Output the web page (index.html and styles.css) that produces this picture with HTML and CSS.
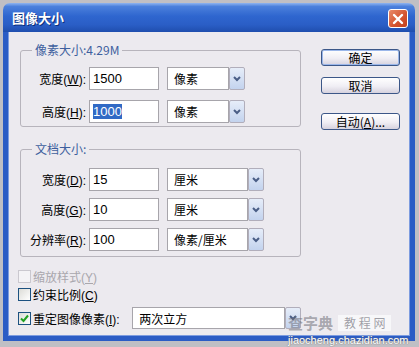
FILE: index.html
```html
<!DOCTYPE html>
<html lang="zh-CN">
<head>
    <meta charset="UTF-8">
    <title>图像大小</title>
    <link rel="stylesheet" href="styles.css">
</head>
<body>
    <div class="window">
        <div class="titlebar">
            <span class="title">图像大小</span>
            <span class="close-btn">
                <svg width="12" height="12" viewBox="0 0 12 12"><path d="M2 2 L10 10 M10 2 L2 10" stroke="#fff" stroke-width="2.4" stroke-linecap="round"/></svg>
            </span>
        </div>

        <div class="frame">
            <div class="left-col">
                <fieldset class="group group-pixels">
                    <legend>像素大小:4.29M</legend>
                    <div class="field">
                        <label>宽度(<u>W</u>):</label>
                        <span class="input">1500</span>
                        <span class="select select-short"><span class="select-box">像素</span><span class="select-btn"><svg width="8" height="6" viewBox="0 0 8 6"><path d="M1 1 L4 4 L7 1" fill="none" stroke="#4a5e86" stroke-width="2"/></svg></span></span>
                    </div>
                    <div class="field">
                        <label>高度(<u>H</u>):</label>
                        <span class="input"><span class="selected-text">1000</span></span>
                        <span class="select select-short"><span class="select-box">像素</span><span class="select-btn"><svg width="8" height="6" viewBox="0 0 8 6"><path d="M1 1 L4 4 L7 1" fill="none" stroke="#4a5e86" stroke-width="2"/></svg></span></span>
                    </div>
                </fieldset>

                <fieldset class="group group-doc">
                    <legend>文档大小:</legend>
                    <div class="field">
                        <label>宽度(<u>D</u>):</label>
                        <span class="input">15</span>
                        <span class="select select-long"><span class="select-box">厘米</span><span class="select-btn"><svg width="8" height="6" viewBox="0 0 8 6"><path d="M1 1 L4 4 L7 1" fill="none" stroke="#4a5e86" stroke-width="2"/></svg></span></span>
                    </div>
                    <div class="field">
                        <label>高度(<u>G</u>):</label>
                        <span class="input">10</span>
                        <span class="select select-long"><span class="select-box">厘米</span><span class="select-btn"><svg width="8" height="6" viewBox="0 0 8 6"><path d="M1 1 L4 4 L7 1" fill="none" stroke="#4a5e86" stroke-width="2"/></svg></span></span>
                    </div>
                    <div class="field">
                        <label>分辨率(<u>R</u>):</label>
                        <span class="input">100</span>
                        <span class="select select-long"><span class="select-box">像素/厘米</span><span class="select-btn"><svg width="8" height="6" viewBox="0 0 8 6"><path d="M1 1 L4 4 L7 1" fill="none" stroke="#4a5e86" stroke-width="2"/></svg></span></span>
                    </div>
                </fieldset>

                <div class="options">
                    <div class="option option-disabled">
                        <span class="checkbox"></span>
                        <span>缩放样式(<u>Y</u>)</span>
                    </div>
                    <div class="option">
                        <span class="checkbox"></span>
                        <span>约束比例(<u>C</u>)</span>
                    </div>
                    <div class="option option-resample">
                        <span class="checkbox">
                            <svg width="9" height="9" viewBox="0 0 9 9"><path d="M1 4.5 L3.5 7 L8 1.5" fill="none" stroke="#21a121" stroke-width="2"/></svg>
                        </span>
                        <span class="option-label">重定图像像素(<u>I</u>):</span>
                        <span class="select select-wide"><span class="select-box">两次立方</span><span class="select-btn"><svg width="8" height="6" viewBox="0 0 8 6"><path d="M1 1 L4 4 L7 1" fill="none" stroke="#4a5e86" stroke-width="2"/></svg></span></span>
                    </div>
                </div>
            </div>

            <div class="right-col">
                <button class="btn btn-default">确定</button>
                <button class="btn">取消</button>
                <button class="btn btn-auto">自动(<u>A</u>)...</button>
            </div>
        </div>
    </div>

    <div class="watermark">
        <div class="wm-top">
            <span class="wm-logo">查字典</span>
            <span class="wm-box">教 程 网</span>
        </div>
        <div class="wm-url">jiaocheng.chazidian.com</div>
    </div>
</body>
</html>
```

FILE: styles.css
```css
body {
    margin: 0;
    background: #c0bfc4;
    font-family: 'Liberation Sans', 'Noto Sans CJK SC', sans-serif;
    font-size: 12px;
    color: #000;
    position: relative;
    width: 419px;
    height: 347px;
    overflow: hidden;
}

.window {
    margin: 3px 0 0 3px;
    width: 412px;
}

.titlebar {
    height: 29px;
    box-sizing: border-box;
    display: flex;
    align-items: center;
    justify-content: space-between;
    padding: 0 7px 0 9px;
    border-radius: 7px 7px 0 0;
    background: linear-gradient(#8fb4f0 0, #4b80dc 12%, #2f66cf 45%, #2a5ec6 75%, #1f4eae 100%);
}

.title {
    color: #fff;
    font-family: 'Noto Sans CJK SC', sans-serif;
    font-size: 13px;
    font-weight: bold;
    text-shadow: 1px 1px 0 #0c2f7a;
}

.close-btn {
    width: 20px;
    height: 19px;
    margin-top: 2px;
    box-sizing: border-box;
    border: 1px solid #fff;
    border-radius: 3px;
    background: linear-gradient(135deg, #e88a6a, #d4532e 60%, #c2421f);
    display: flex;
    align-items: center;
    justify-content: center;
}

.frame {
    height: 309px;
    box-sizing: border-box;
    border: 5px solid #2b5cc5;
    border-top: 0;
    background: #eceaef;
    display: flex;
    gap: 20px;
    padding: 10px 0 0 12px;
    box-shadow: inset 1px 0 0 #7d9ce0, inset -1px 0 0 #7d9ce0, inset 0 -1px 0 #7d9ce0;
}

.left-col {
    width: 281px;
}

.group {
    margin: 0;
    min-inline-size: 0;
    box-sizing: border-box;
    width: 281px;
    border: 1px solid #b7b4bc;
    border-radius: 3px;
    padding: 9px 0 3px 4px;
}

.group legend {
    margin-left: 7px;
    padding: 0 3px;
    line-height: 16px;
    color: #3e5f9e;
    font-family: 'Noto Sans CJK SC', sans-serif;
}

.group-doc {
    margin-top: 14px;
    padding-top: 11px;
    padding-bottom: 5px;
}

.field {
    display: flex;
    align-items: center;
    height: 23px;
}

.group-pixels .field + .field {
    margin-top: 10px;
}

.group-doc .field + .field {
    margin-top: 7px;
}

.field label {
    width: 64px;
    box-sizing: border-box;
    padding-right: 3px;
    text-align: right;
    white-space: nowrap;
}

.input {
    width: 70px;
    height: 23px;
    box-sizing: border-box;
    border: 1px solid #a7a5ab;
    background: #fff;
    margin-right: 8px;
    padding-left: 3px;
    display: flex;
    align-items: center;
    font-size: 13px;
}

.selected-text {
    background: #316ac5;
    color: #fff;
    line-height: 15px;
}

.select {
    display: flex;
    height: 23px;
}

.select-short {
    width: 78px;
}

.select-long {
    width: 97px;
}

.select-wide {
    width: 170px;
    height: 22px;
}

.select-box {
    flex: 1;
    box-sizing: border-box;
    border: 1px solid #a7a5ab;
    background: #fff;
    padding-left: 6px;
    display: flex;
    align-items: center;
    font-family: 'Noto Sans CJK SC', sans-serif;
    white-space: nowrap;
}

.select-btn {
    width: 16px;
    box-sizing: border-box;
    border: 1px solid #b1aebb;
    border-radius: 2px;
    background: linear-gradient(#e6edf9, #c3d3ee);
    display: flex;
    align-items: center;
    justify-content: center;
}

.options {
    margin-top: 11px;
}

.option {
    display: flex;
    align-items: center;
    height: 17px;
    margin-top: 1px;
}

.option:first-child {
    margin-top: 0;
}

.option-resample {
    height: 22px;
    margin-top: 4px;
}

.option-disabled {
    color: #a9a7ad;
}

.checkbox {
    width: 13px;
    height: 13px;
    box-sizing: border-box;
    margin-left: -2px;
    margin-right: 2px;
    border: 1px solid #1c5180;
    background: linear-gradient(135deg, #dcdcd7, #fff);
    display: flex;
    align-items: center;
    justify-content: center;
}

.option-disabled .checkbox {
    border-color: #cac8cf;
    background: #f4f3f6;
}

.option-label {
    width: 100px;
}

.right-col {
    width: 79px;
    padding-top: 7px;
    display: flex;
    flex-direction: column;
}

.btn {
    height: 17px;
    padding: 0;
    border: 1px solid #3c5788;
    border-radius: 3px;
    background: linear-gradient(#ffffff, #f0eef4 55%, #d6d2de);
    font-family: 'Noto Sans CJK SC', sans-serif;
    font-size: 12px;
    line-height: 15px;
    color: #000;
}

.btn + .btn {
    margin-top: 11px;
}

.btn-default {
    box-shadow: inset 0 0 0 1px #9bb7ea;
}

.btn + .btn-auto {
    margin-top: 19px;
}

.watermark {
    position: absolute;
    left: 288px;
    top: 312px;
    width: 128px;
}

.wm-top {
    display: flex;
    align-items: center;
    gap: 5px;
}

.wm-logo {
    font-family: 'Noto Sans CJK SC', sans-serif;
    font-size: 15px;
    font-weight: bold;
    color: rgba(110, 110, 120, 0.55);
}

.wm-box {
    background: rgba(255, 255, 255, 0.6);
    padding: 0 6px;
    height: 16px;
    line-height: 16px;
    font-family: 'Noto Sans CJK SC', sans-serif;
    font-size: 12px;
    color: rgba(120, 120, 130, 0.7);
}

.wm-url {
    margin-top: 1px;
    font-size: 11px;
    color: #fff;
    text-shadow: 0 0 1px #777, 0 0 1px #777;
}
```
